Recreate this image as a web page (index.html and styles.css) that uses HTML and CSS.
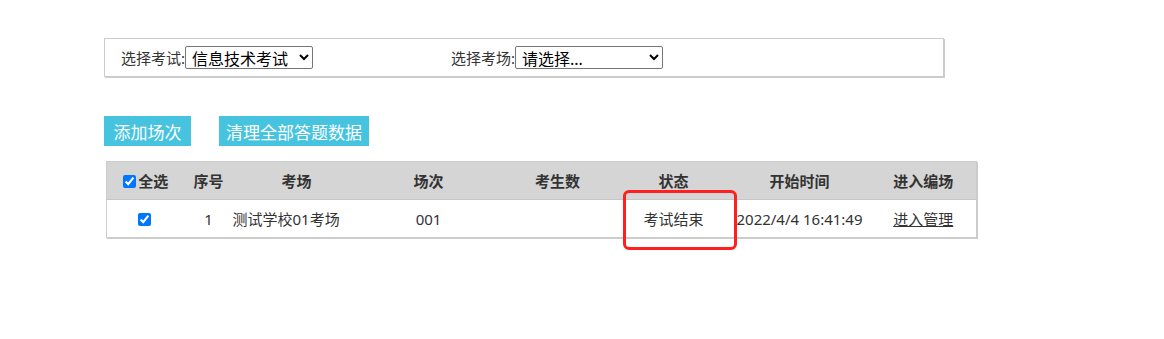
FILE: index.html
```html
<!DOCTYPE html>
<html lang="zh-cn">
<head>
    <meta charset="UTF-8">
    <title>考场管理</title>
    <link rel="stylesheet" href="styles.css">
</head>
<body>
    <div id="pagina">
        <div id="filtro">
            <div class="grupo">
                <label>选择考试:</label>
                <select class="sel-exame">
                    <option>信息技术考试</option>
                </select>
            </div>
            <div class="grupo">
                <label>选择考场:</label>
                <select class="sel-sala">
                    <option>请选择...</option>
                </select>
            </div>
        </div>

        <div id="acoes">
            <button class="b1">添加场次</button>
            <button class="b2">清理全部答题数据</button>
        </div>

        <table id="tabela">
            <thead>
                <tr>
                    <th class="c1"><input type="checkbox" checked>全选</th>
                    <th class="c2">序号</th>
                    <th class="c3">考场</th>
                    <th class="c4">场次</th>
                    <th class="c5">考生数</th>
                    <th class="c6">状态</th>
                    <th class="c7">开始时间</th>
                    <th class="c8">进入编场</th>
                </tr>
            </thead>
            <tbody>
                <tr>
                    <td><input type="checkbox" checked></td>
                    <td>1</td>
                    <td class="esq">测试学校01考场</td>
                    <td>001</td>
                    <td></td>
                    <td>考试结束</td>
                    <td>2022/4/4 16:41:49</td>
                    <td><a href="#">进入管理</a></td>
                </tr>
            </tbody>
        </table>

        <!-- marcação vermelha sobre o status -->
        <div id="marca"></div>
    </div>
</body>
</html>
```

FILE: styles.css
```css
* {
    margin: 0;
    padding: 0;
    box-sizing: border-box;
}

html, body {
    min-height: 100%;
}

body {
    font-family: "Noto Sans", "Noto Sans CJK SC", sans-serif;
    color: #333;
    background-color: #fff;
}

#pagina {
    position: relative;
    min-height: 339px;
    padding: 38px 0 0 104px;
}

#filtro {
    width: 840px;
    height: 39px;
    border: 1px solid #ccc;
    box-shadow: 1px 1px 0 #ccc;
    display: flex;
    align-items: center;
    padding-left: 16px;
}

.grupo {
    display: flex;
    align-items: center;
    font-size: 15px;
}

.grupo:first-child {
    width: 330px;
}

.grupo select {
    font-family: "Noto Sans", "Noto Sans CJK SC", sans-serif;
    font-size: 16px;
    height: 23px;
    color: #000;
    border: 1px solid #767676;
    border-radius: 2px;
    background-color: #fff;
    padding: 0 2px;
}

.sel-exame {
    width: 128px;
}

.sel-sala {
    width: 148px;
}

#acoes {
    display: flex;
    gap: 28px;
    margin-top: 39px;
}

#acoes button {
    height: 30px;
    background-color: #46c3df;
    color: #fff;
    border: none;
    font-family: "Noto Sans CJK SC", sans-serif;
    font-size: 17px;
    text-align: center;
    cursor: pointer;
}

#acoes .b1 {
    width: 87px;
}

#acoes .b2 {
    width: 150px;
}

#tabela {
    margin: 15px 0 0 2px;
    width: 870px;
    border-collapse: collapse;
    border: 1px solid #ccc;
    box-shadow: 1px 1px 0 #ccc;
    font-size: 15px;
    table-layout: fixed;
}

#tabela th {
    height: 38px;
    padding: 0;
    background-color: #d5d5d5;
    font-weight: bold;
    border-bottom: 1px solid #c6c6c6;
}

#tabela td {
    height: 38px;
    padding: 0;
    text-align: center;
}

#tabela td.esq {
    text-align: left;
}

#tabela input[type="checkbox"] {
    width: 13px;
    height: 13px;
    margin: 0 2px 0 0;
    vertical-align: -1px;
}

#tabela a {
    color: #333;
}

.c1 { width: 78px; }
.c2 { width: 48px; }
.c3 { width: 128px; }
.c4 { width: 136px; }
.c5 { width: 122px; }
.c6 { width: 110px; }
.c7 { width: 142px; }
.c8 { width: 106px; }

#marca {
    position: absolute;
    left: 623px;
    top: 190px;
    width: 114px;
    height: 60px;
    border: 3px solid #ff1f1f;
    border-radius: 6px;
}
```
